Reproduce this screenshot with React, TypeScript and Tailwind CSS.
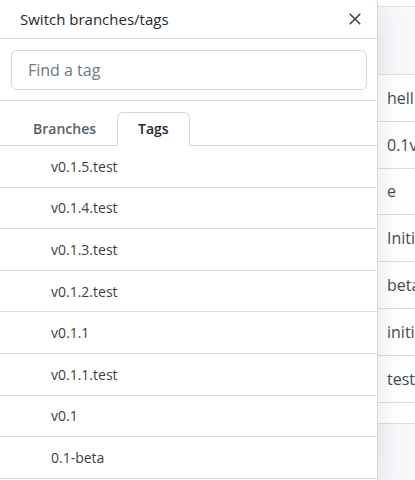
import React from "react";

const tags = [
  "v0.1.5.test",
  "v0.1.4.test",
  "v0.1.3.test",
  "v0.1.2.test",
  "v0.1.1",
  "v0.1.1.test",
  "v0.1",
  "0.1-beta",
];

const bgRows = ["hell", "0.1v", "e", "Initi", "beta", "initi", "test", ""];

export default function App() {
  return (
    <div
      className="flex h-[480px] w-[415px] overflow-hidden bg-white"
      style={{ fontFamily: '"Open Sans", "Noto Sans", sans-serif' }}
    >
      <div className="relative z-10 flex w-[378px] shrink-0 flex-col rounded-tr-[4px] border-r border-[#d0d7de] bg-white shadow-[0_8px_24px_rgba(140,149,159,0.25)]">
        <div className="flex h-[39px] items-center justify-between border-b border-[#d8dee4] pl-[20px] pr-[14px]">
          <span className="text-[15px] leading-5 text-[#24292f]">Switch branches/tags</span>
          <svg width="16" height="16" viewBox="0 0 16 16" className="text-[#3b4148]">
            <path
              d="M3.2 3.2 12.8 12.8M12.8 3.2 3.2 12.8"
              stroke="currentColor"
              strokeWidth="1.6"
              strokeLinecap="round"
            />
          </svg>
        </div>
        <div className="border-b border-[#d8dee4] pb-[10px] pl-[11px] pr-[10px] pt-[11px]">
          <div className="flex h-[40px] items-center rounded-[6px] border border-[#d0d7de] px-[16px]">
            <span className="text-[16px] text-[#6e7781]">Find a tag</span>
          </div>
        </div>
        <div className="flex border-b border-[#d0d7de] pl-[12px] pt-[11px]">
          <div className="mb-[-1px] border border-transparent px-[20px] py-[6px] text-[14px] font-semibold leading-5 text-[#57606a]">
            Branches
          </div>
          <div className="mb-[-1px] rounded-t-[6px] border border-[#d0d7de] border-b-white bg-white px-[20px] py-[6px] text-[14px] font-semibold leading-5 text-[#24292f]">
            Tags
          </div>
        </div>
        <div className="flex flex-col">
          {tags.map((t) => (
            <div
              key={t}
              className="box-border flex h-[41.6px] shrink-0 items-center border-b border-[#d8dee4] pl-[51px] text-[14px] text-[#3a3f44]"
            >
              {t}
            </div>
          ))}
        </div>
      </div>
      <div className="flex flex-1 flex-col overflow-hidden bg-[#f6f8fa]">
        <div className="h-[7px] shrink-0 border-b border-[#e1e5ea] bg-white" />
        <div className="h-[68px] shrink-0 border-b border-[#d8dee4] bg-[#f6f8fa]" />
        {bgRows.map((r, i) => (
          <div
            key={i}
            className={`flex shrink-0 items-center overflow-hidden whitespace-nowrap border-b border-[#d8dee4] bg-white pl-[9px] text-[16px] text-[#424a53] ${
              i === 7 ? "h-[21px]" : "h-[46.8px]"
            }`}
          >
            {r}
          </div>
        ))}
      </div>
    </div>
  );
}
